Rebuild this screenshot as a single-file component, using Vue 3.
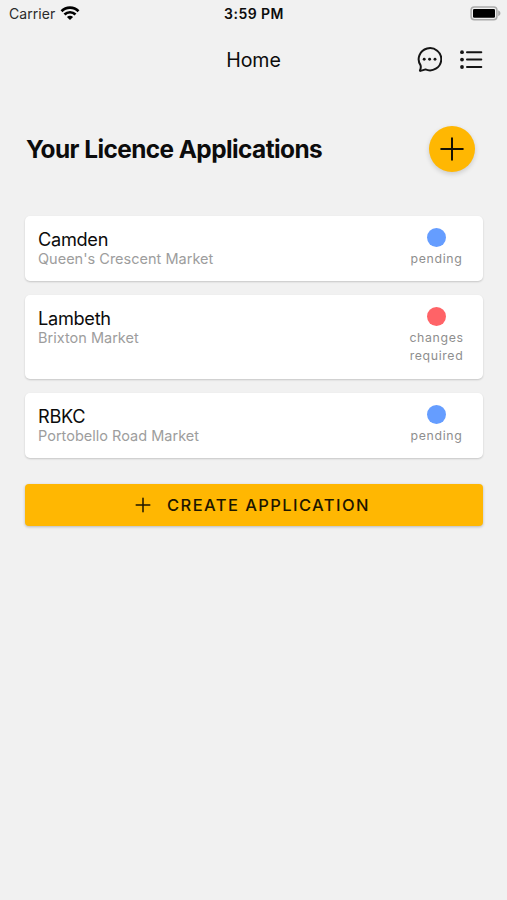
<script setup>
const applications = [
  { council: 'Camden', market: "Queen's Crescent Market", status: ['pending'], tone: 'blue', key: 'camden' },
  { council: 'Lambeth', market: 'Brixton Market', status: ['changes', 'required'], tone: 'red', key: 'lambeth' },
  { council: 'RBKC', market: 'Portobello Road Market', status: ['pending'], tone: 'blue', key: 'rbkc' },
]
</script>

<template>
  <div class="screen">
    <div class="status-bar">
      <div class="carrier">
        <span class="carrier-name">Carrier</span>
        <svg class="wifi" width="20" height="16" viewBox="0 0 20 16">
          <g fill="none" stroke="#000" stroke-width="2.7">
            <path d="M1.5 6.2C6.2 1.4 13.8 1.4 18.5 6.2" />
            <path d="M4.5 9.5C7.5 6.5 12.5 6.5 15.5 9.5" />
          </g>
          <path d="M6.9 12C8.6 10.4 11.4 10.4 13.1 12L10 15.1Z" />
        </svg>
      </div>
      <span class="time">3:59 PM</span>
      <div class="battery-wrap">
        <svg width="32" height="16" viewBox="0 0 32 16">
          <rect x="1.1" y="1.9" width="25.8" height="12.8" rx="3.2" fill="#f1f1f1" stroke="#aaa" stroke-width="1.5" />
          <rect x="3" y="3.9" width="22" height="8.9" rx="1.3" />
          <path d="M28.2 5.3C31.2 6.8 31.2 9.8 28.2 11.3Z" fill="#aaa" />
        </svg>
      </div>
    </div>

    <header class="toolbar">
      <span class="toolbar-title">Home</span>
      <div class="toolbar-icons">
        <svg width="26" height="26" viewBox="0 0 26 26">
          <path d="M4.6 18.4A11.3 11.1 0 1 1 9.5 22.4Q7.3 23.2 4.4 23.9Q3.8 23.9 4 23.3Q5.2 20.9 4.6 18.4Z" fill="none" stroke="#151515" stroke-width="2" stroke-linejoin="round" />
          <circle cx="8.2" cy="12.2" r="1.45" fill="#151515" />
          <circle cx="13.6" cy="12.2" r="1.45" fill="#151515" />
          <circle cx="19" cy="12.2" r="1.45" fill="#151515" />
        </svg>
        <svg width="24" height="22" viewBox="0 0 24 22">
          <g fill="#151515">
            <circle cx="3" cy="3.2" r="1.9" />
            <circle cx="3" cy="10.6" r="1.9" />
            <circle cx="3" cy="18" r="1.9" />
          </g>
          <path d="M8 3.2H22.3M8 10.6H22.3M8 18H22.3" stroke="#151515" stroke-width="2" stroke-linecap="round" />
        </svg>
      </div>
    </header>

    <main class="content">
      <div class="heading-row">
        <h1>Your Licence Applications</h1>
        <button class="fab" aria-label="Add">
          <svg width="24" height="24" viewBox="0 0 24 24">
            <path d="M12 1.2V22.8M1.2 12H22.8" stroke="#161204" stroke-width="2" stroke-linecap="round" />
          </svg>
        </button>
      </div>

      <section class="cards">
        <article v-for="app in applications" :key="app.key" class="card">
          <div class="info">
            <div class="council">{{ app.council }}</div>
            <div class="market">{{ app.market }}</div>
          </div>
          <div class="state">
            <span class="dot" :class="app.tone"></span>
            <span v-for="word in app.status" :key="word" class="word">{{ word }}</span>
          </div>
        </article>
      </section>

      <button class="create">
        <svg width="16" height="16" viewBox="0 0 16 16">
          <path d="M8 1.2V14.8M1.2 8H14.8" stroke="#1d1600" stroke-width="1.5" stroke-linecap="round" />
        </svg>
        <span>CREATE APPLICATION</span>
      </button>
    </main>
  </div>
</template>

<style>
body {
  background: #f1f1f1;
}
</style>

<style scoped>
.screen {
  box-sizing: border-box;
  width: 507px;
  height: 900px;
  background: #f1f1f1;
  font-family: Inter, "Liberation Sans", sans-serif;
  color: #0c0c0c;
  overflow: hidden;
}
.status-bar {
  display: grid;
  grid-template-columns: 1fr auto 1fr;
  height: 28px;
  align-items: center;
  padding: 0 5px 0 9px;
}
.carrier {
  display: flex;
  align-items: center;
  gap: 5px;
}
.carrier-name {
  margin-top: -2px;
  font-size: 14px;
  letter-spacing: 0.05px;
  color: #2b2b2b;
}
.wifi {
  margin-top: -3px;
}
.time {
  margin-top: -2px;
  margin-left: -3px;
  font-size: 14px;
  font-weight: 600;
  letter-spacing: 0.45px;
}
.battery-wrap {
  display: flex;
  justify-content: flex-end;
  margin-top: -3px;
}
.toolbar {
  display: grid;
  grid-template-columns: 1fr auto 1fr;
  align-items: center;
  height: 64px;
  padding: 0 24px;
}
.toolbar-title {
  grid-column: 2;
  font-size: 19.6px;
  letter-spacing: -0.05px;
}
.toolbar-icons {
  display: flex;
  justify-content: flex-end;
  align-items: center;
  gap: 17px;
}
.content {
  padding: 34px 24px 0 25px;
}
.heading-row {
  display: flex;
  justify-content: space-between;
  align-items: center;
  height: 46px;
  padding: 0 8px 0 1px;
}
h1 {
  margin: 0;
  font-size: 24.4px;
  font-weight: 700;
  letter-spacing: -0.57px;
  white-space: nowrap;
}
button {
  border: 0;
  padding: 0;
  font-family: inherit;
  background: #ffb702;
}
.fab {
  display: flex;
  align-items: center;
  justify-content: center;
  width: 46px;
  height: 46px;
  border-radius: 50%;
  box-shadow: 0 2px 5px rgba(0, 0, 0, 0.16);
}
.cards {
  display: flex;
  flex-direction: column;
  gap: 14px;
  margin-top: 43.5px;
}
.card {
  display: flex;
  justify-content: space-between;
  padding: 12px 14px 13.5px 13px;
  border-radius: 5px;
  background: #fff;
  box-shadow: 0 1px 2px rgba(0, 0, 0, 0.18);
}
.council {
  height: 22px;
  line-height: 22px;
  font-size: 18.2px;
  letter-spacing: -0.3px;
}
.market {
  height: 18px;
  line-height: 18px;
  font-size: 14.5px;
  letter-spacing: 0.01px;
  color: #9d9d9d;
}
.state {
  display: flex;
  flex-direction: column;
  align-items: center;
  width: 65px;
}
.dot {
  width: 19px;
  height: 19px;
  margin-bottom: 3px;
  border-radius: 50%;
}
.blue {
  background: #659dff;
}
.red {
  background: #ff6367;
}
.word {
  height: 18px;
  font-size: 12.3px;
  line-height: 18px;
  letter-spacing: 0.65px;
  color: #8e8e8e;
}
.create {
  display: flex;
  align-items: center;
  justify-content: center;
  gap: 16px;
  width: 100%;
  height: 42.5px;
  margin-top: 25.5px;
  padding-right: 3px;
  border-radius: 4px;
  color: #1d1600;
  font-size: 16.5px;
  font-weight: 500;
  letter-spacing: 1.42px;
  box-shadow: 0 1px 3px rgba(0, 0, 0, 0.24);
}
</style>
